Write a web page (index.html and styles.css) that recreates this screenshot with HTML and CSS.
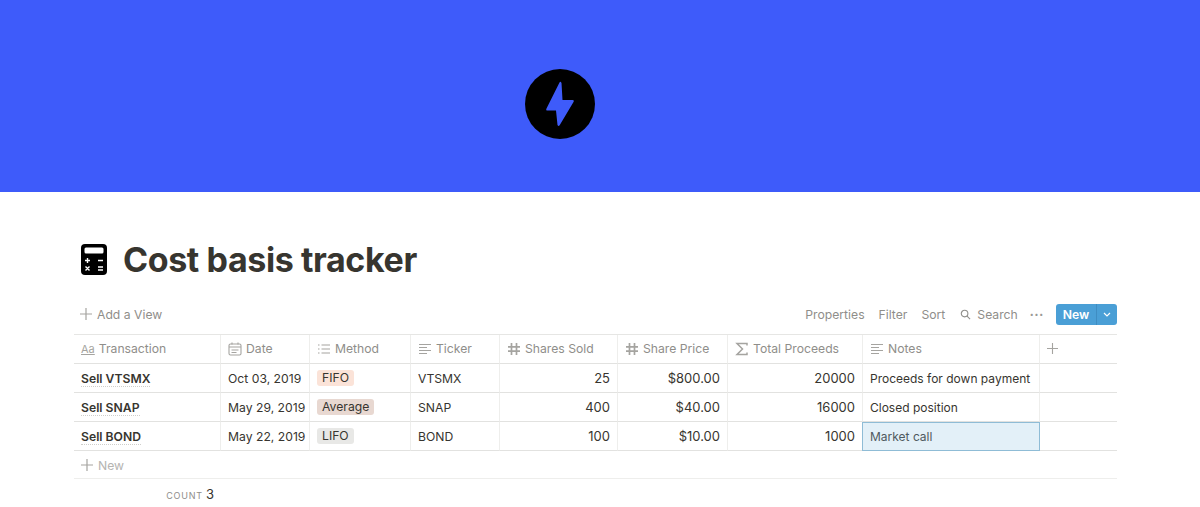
FILE: index.html
```html
<!DOCTYPE html>
<html lang="en">
<head>
    <meta charset="UTF-8">
    <title>Cost basis tracker</title>
    <link rel="stylesheet" href="styles.css">
</head>
<body>
    <div class="cover">
        <svg class="cover-icon" viewBox="0 0 70 70" width="70" height="70">
            <circle cx="35" cy="35" r="35" fill="#000"/>
            <path d="M34.500 13.500 L21.500 39.500 Q20.500 41.500 22.500 41.500 L31 41.500 L32.500 56 Q33.500 58 34.800 56 L48.500 33 Q49.500 31 47.500 31 L37.500 31 L36.500 14 Q35.500 12 34.500 13.500 Z" fill="#3e5bfa"/>
        </svg>
    </div>

    <div class="page">
        <div class="title-row">
            <svg class="calc" viewBox="0 0 26 31" width="26" height="31">
                <rect width="26" height="31" rx="4" fill="#000"/>
                <rect x="3.500" y="3.500" width="19" height="6" rx="1.500" fill="#fff"/>
                <path d="M6.500 14v5M4 16.500h5M17 16.500h5M4.500 22.500l4 4M8.500 22.500l-4 4M17 23h5M17 26h5" stroke="#fff" stroke-width="1.400" fill="none"/>
            </svg>
            <h1>Cost basis tracker</h1>
        </div>

        <div class="toolbar">
            <div class="add-view">
                <svg class="plus" viewBox="0 0 12 12" width="12" height="12"><path d="M6 0v12M0 6h12"/></svg>
                <span>Add a View</span>
            </div>
            <div class="tools">
                <span>Properties</span>
                <span>Filter</span>
                <span>Sort</span>
                <span class="search">
                    <svg viewBox="0 0 12 12" width="11" height="11"><circle cx="5" cy="5" r="3.600"/><path d="M7.700 7.700L11 11"/></svg>
                    Search
                </span>
                <span class="dots">•••</span>
                <div class="new-btn">
                    <span class="new-label">New</span>
                    <span class="new-arrow">
                        <svg viewBox="0 0 8 5" width="8" height="5"><path d="M1 1l3 3 3-3"/></svg>
                    </span>
                </div>
            </div>
        </div>

        <div class="table">
            <div class="cell head">
                <span class="aa">Aa</span>Transaction
            </div>
            <div class="cell head">
                <svg class="ico" viewBox="0 0 14 14" width="14" height="14"><rect x="1" y="2" width="12" height="11" rx="1.500"/><path d="M1 5h12M3.500 8h7M3.500 10.500h5M4 .5v2M10 .5v2"/></svg>
                Date
            </div>
            <div class="cell head">
                <svg class="ico" viewBox="0 0 14 14" width="14" height="14"><path d="M1 3h1.500M1 7h1.500M1 11h1.500M4.500 3H13M4.500 7H13M4.500 11H13"/></svg>
                Method
            </div>
            <div class="cell head">
                <svg class="ico" viewBox="0 0 14 14" width="14" height="14"><path d="M1 2.500h12M1 5.500h8M1 8.500h12M1 11.500h8"/></svg>
                Ticker
            </div>
            <div class="cell head">
                <svg class="ico hash" viewBox="0 0 14 14" width="14" height="14"><path d="M4.500 1v12M9.500 1v12M1 4.800h12M1 9.200h12"/></svg>
                Shares Sold
            </div>
            <div class="cell head">
                <svg class="ico hash" viewBox="0 0 14 14" width="14" height="14"><path d="M4.500 1v12M9.500 1v12M1 4.800h12M1 9.200h12"/></svg>
                Share Price
            </div>
            <div class="cell head">
                <svg class="ico" viewBox="0 0 14 14" width="14" height="14"><path d="M12 3.500V1.500H2L7.500 7 2 12.500h10v-2" stroke-width="1.500"/></svg>
                Total Proceeds
            </div>
            <div class="cell head">
                <svg class="ico" viewBox="0 0 14 14" width="14" height="14"><path d="M1 2.500h12M1 5.500h8M1 8.500h12M1 11.500h8"/></svg>
                Notes
            </div>
            <div class="cell head last">
                <svg class="plus" viewBox="0 0 12 12" width="11" height="11"><path d="M6 0v12M0 6h12"/></svg>
            </div>

            <div class="cell name"><span>Sell VTSMX</span></div>
            <div class="cell">Oct 03, 2019</div>
            <div class="cell"><span class="tag fifo">FIFO</span></div>
            <div class="cell">VTSMX</div>
            <div class="cell num">25</div>
            <div class="cell num">$800.00</div>
            <div class="cell num">20000</div>
            <div class="cell note">Proceeds for down payment</div>
            <div class="cell last"></div>

            <div class="cell name"><span>Sell SNAP</span></div>
            <div class="cell">May 29, 2019</div>
            <div class="cell"><span class="tag average">Average</span></div>
            <div class="cell">SNAP</div>
            <div class="cell num">400</div>
            <div class="cell num">$40.00</div>
            <div class="cell num">16000</div>
            <div class="cell note">Closed position</div>
            <div class="cell last"></div>

            <div class="cell name"><span>Sell BOND</span></div>
            <div class="cell">May 22, 2019</div>
            <div class="cell"><span class="tag lifo">LIFO</span></div>
            <div class="cell">BOND</div>
            <div class="cell num">100</div>
            <div class="cell num">$10.00</div>
            <div class="cell num">1000</div>
            <div class="cell note selected">Market call</div>
            <div class="cell last"></div>
        </div>

        <div class="new-row">
            <svg class="plus" viewBox="0 0 12 12" width="12" height="12"><path d="M6 0v12M0 6h12"/></svg>
            <span>New</span>
        </div>

        <div class="count"><span class="count-label">COUNT</span><span class="count-value">3</span></div>
    </div>
</body>
</html>
```

FILE: styles.css
```css
html, body {
    margin: 0;
    height: 507px;
    overflow: hidden;
}
body {
    font-family: 'Inter', 'Liberation Sans', sans-serif;
    font-size: 12.2px;
    color: #37352f;
    background-color: #ffffff;
}
.cover {
    height: 192px;
    box-sizing: border-box;
    padding: 69px 0 0 525px;
    background-color: #3e5bfa;
}
.cover-icon {
    display: block;
}
.page {
    padding: 0 83px 0 74px;
}
.title-row {
    display: flex;
    align-items: center;
    gap: 16px;
    height: 60px;
    margin-top: 37px;
    padding-left: 7px;
}
.calc {
    flex: none;
}
h1 {
    margin: 0;
    font-size: 34px;
    font-weight: 700;
    letter-spacing: -0.4px;
    color: #37352f;
}
.toolbar {
    display: flex;
    justify-content: space-between;
    align-items: center;
    height: 30px;
    margin-top: 10px;
    margin-bottom: 5px;
    color: #8f8e8a;
}
.add-view {
    display: flex;
    align-items: center;
    gap: 5px;
    padding-left: 6px;
}
.plus {
    stroke: #a5a4a0;
    stroke-width: 1.200;
    fill: none;
}
.tools {
    display: flex;
    align-items: center;
    gap: 14px;
}
.search {
    display: flex;
    align-items: center;
    gap: 6px;
    margin-left: 1px;
}
.search svg {
    stroke: #8f8e8a;
    stroke-width: 1.200;
    fill: none;
}
.dots {
    font-size: 7px;
    letter-spacing: 0.8px;
    color: #9a9995;
    margin-left: -2px;
}
.new-btn {
    display: flex;
    height: 21px;
    margin-left: -2px;
    border-radius: 3px;
    background-color: #4a9fd6;
    color: #ffffff;
    font-weight: 600;
    overflow: hidden;
}
.new-label {
    width: 40px;
    line-height: 21px;
    text-align: center;
}
.new-arrow {
    width: 20px;
    display: flex;
    align-items: center;
    justify-content: center;
    border-left: 1px solid #3f8dc2;
}
.new-arrow svg {
    stroke: #ffffff;
    stroke-width: 1.200;
    fill: none;
}
.table {
    display: grid;
    grid-template-columns: 147px 89px 101px 89px 118px 110px 135px 177px 77px;
    grid-auto-rows: 29px;
    border-top: 1px solid #e6e6e4;
}
.cell {
    display: flex;
    align-items: center;
    padding: 0 7px;
    border-right: 1px solid #eeeeec;
    border-bottom: 1px solid #e2e2e0;
    box-sizing: border-box;
    white-space: nowrap;
    overflow: hidden;
}
.cell.last {
    border-right: none;
}
.head {
    color: #8f8e8a;
    gap: 4px;
    padding-bottom: 1px;
}
.ico {
    flex: none;
    stroke: #a5a4a0;
    stroke-width: 1.100;
    fill: none;
}
.hash {
    stroke-width: 1.700;
}
.aa {
    font-size: 11px;
    color: #a5a4a0;
    text-decoration: underline;
}
.name {
    font-weight: 600;
    padding-top: 2px;
}
.name span {
    border-bottom: 1px dotted #cfcfcc;
    line-height: 15px;
}
.num {
    justify-content: flex-end;
    font-size: 13px;
}
.note {
    font-size: 12px;
}
.tag {
    padding: 0 5px;
    line-height: 16px;
    border-radius: 3px;
}
.fifo {
    background-color: #fbe3d8;
}
.average {
    background-color: #e8d8d1;
}
.lifo {
    background-color: #e8e8e6;
}
.selected {
    padding-left: 7px;
    margin-left: -1px;
    background-color: #e3f0f8;
    border: 1px solid #8fbcd6;
    color: #4f5a60;
}
.new-row {
    display: flex;
    align-items: center;
    gap: 5px;
    height: 27px;
    padding-left: 7px;
    padding-top: 1px;
    box-sizing: border-box;
    color: #b5b4b1;
    border-bottom: 1px solid #eeeeec;
    height: 28px;
}
.count {
    display: flex;
    align-items: baseline;
    justify-content: flex-end;
    width: 140px;
    gap: 3px;
    margin-top: 7px;
}
.count-label {
    font-size: 9px;
    letter-spacing: 0.8px;
    color: #8f8e8a;
}
.count-value {
    font-size: 13px;
    color: #37352f;
}
```
